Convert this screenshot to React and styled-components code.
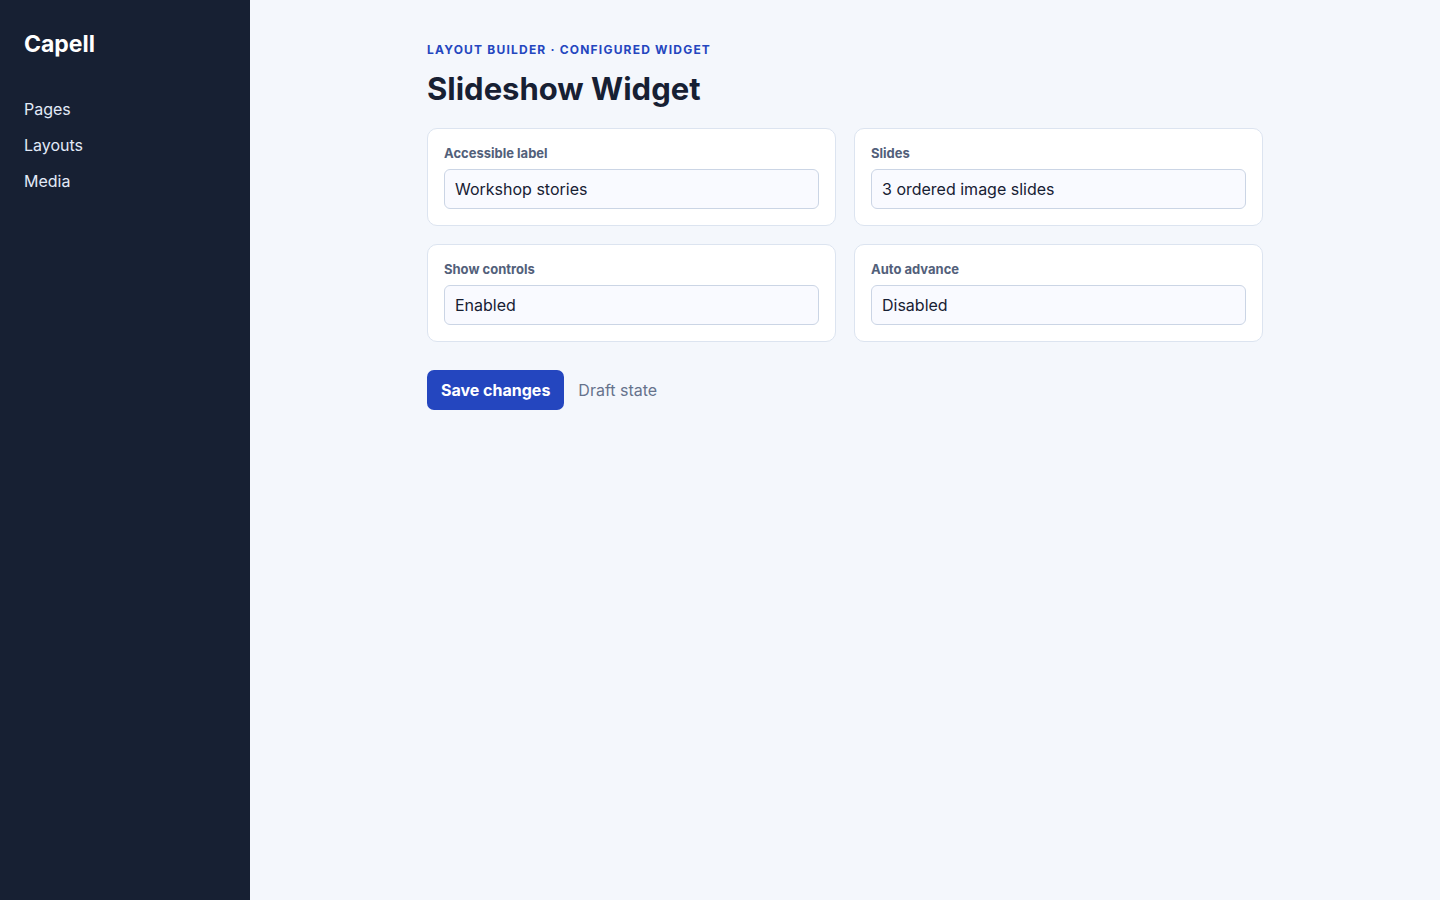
import React from 'react';
import styled, { createGlobalStyle } from 'styled-components';

const colors = {
	page: '#f4f7fc',
	sidebar: '#172033',
	navText: '#e2eaf8',
	text: '#172033',
	label: '#52607a',
	muted: '#66738c',
	accent: '#2446bf',
	cardBorder: '#dce4f0',
	fieldBorder: '#cbd5e5',
	field: '#f9faff',
};

const GlobalStyle = createGlobalStyle`
	* {
		box-sizing: border-box;
	}

	body {
		margin: 0;
		background-color: ${colors.page};
		color: ${colors.text};
		font-family: Inter, sans-serif;
		font-size: 16px;
	}
`;

const Shell = styled.div`
	display: grid;
	grid-template-columns: 250px 1fr;
	min-height: 100vh;
`;

const Sidebar = styled.aside`
	padding: 30px 24px;
	background-color: ${colors.sidebar};
	color: #fff;
`;

const Brand = styled.div`
	margin-bottom: 32px;
	font-size: 23px;
	line-height: 29px;
	font-weight: 700;
`;

const Nav = styled.nav`
	display: grid;
`;

const NavLink = styled.a`
	padding: 8px 0;
	color: ${colors.navText};
	line-height: 20px;
	text-decoration: none;
`;

const Main = styled.main`
	width: 100%;
	max-width: 920px;
	margin: 0 auto;
	padding: 42px;
`;

const Eyebrow = styled.p`
	margin: 0;
	color: ${colors.accent};
	font-size: 12px;
	line-height: 15px;
	font-weight: 700;
	letter-spacing: 0.1em;
	text-transform: uppercase;
`;

const Title = styled.h1`
	margin: 12px 0 20px;
	font-size: 31px;
	line-height: 39px;
	font-weight: 700;
`;

const Fields = styled.div`
	display: grid;
	grid-template-columns: 1fr 1fr;
	gap: 18px;
`;

const Card = styled.div`
	padding: 16px;
	border: 1px solid ${colors.cardBorder};
	border-radius: 10px;
	background-color: #fff;
`;

const Label = styled.label`
	display: block;
	margin-bottom: 8px;
	color: ${colors.label};
	font-size: 13px;
	line-height: 16px;
	font-weight: 700;
`;

const Input = styled.input`
	display: block;
	width: 100%;
	height: 40px;
	padding: 0 10px;
	border: 1px solid ${colors.fieldBorder};
	border-radius: 6px;
	background-color: ${colors.field};
	color: ${colors.text};
	font: inherit;
`;

const Actions = styled.div`
	display: flex;
	align-items: center;
	gap: 14px;
	margin-top: 28px;
`;

const SaveButton = styled.button`
	height: 40px;
	padding: 0 14px;
	border: 0;
	border-radius: 7px;
	background-color: ${colors.accent};
	color: #fff;
	font: inherit;
	font-weight: 700;
`;

const Status = styled.span`
	color: ${colors.muted};
`;

const navItems = ['Pages', 'Layouts', 'Media'];

const fields = [
	{ id: 'accessible-label', label: 'Accessible label', value: 'Workshop stories' },
	{ id: 'slides', label: 'Slides', value: '3 ordered image slides' },
	{ id: 'show-controls', label: 'Show controls', value: 'Enabled' },
	{ id: 'auto-advance', label: 'Auto advance', value: 'Disabled' },
];

const Field = ({ id, label, value }) => (
	<Card>
		<Label htmlFor={id}>{label}</Label>
		<Input id={id} type="text" defaultValue={value}/>
	</Card>
);

const App = () => (
	<Shell>
		<GlobalStyle/>
		<Sidebar>
			<Brand>Capell</Brand>
			<Nav>
				{navItems.map(item => <NavLink key={item} href={'#' + item.toLowerCase()}>{item}</NavLink>)}
			</Nav>
		</Sidebar>
		<Main>
			<Eyebrow>Layout Builder · Configured widget</Eyebrow>
			<Title>Slideshow Widget</Title>
			<Fields>
				{fields.map(field => <Field key={field.id} {...field}/>)}
			</Fields>
			<Actions>
				<SaveButton type="button">Save changes</SaveButton>
				<Status>Draft state</Status>
			</Actions>
		</Main>
	</Shell>
);

export default App;
